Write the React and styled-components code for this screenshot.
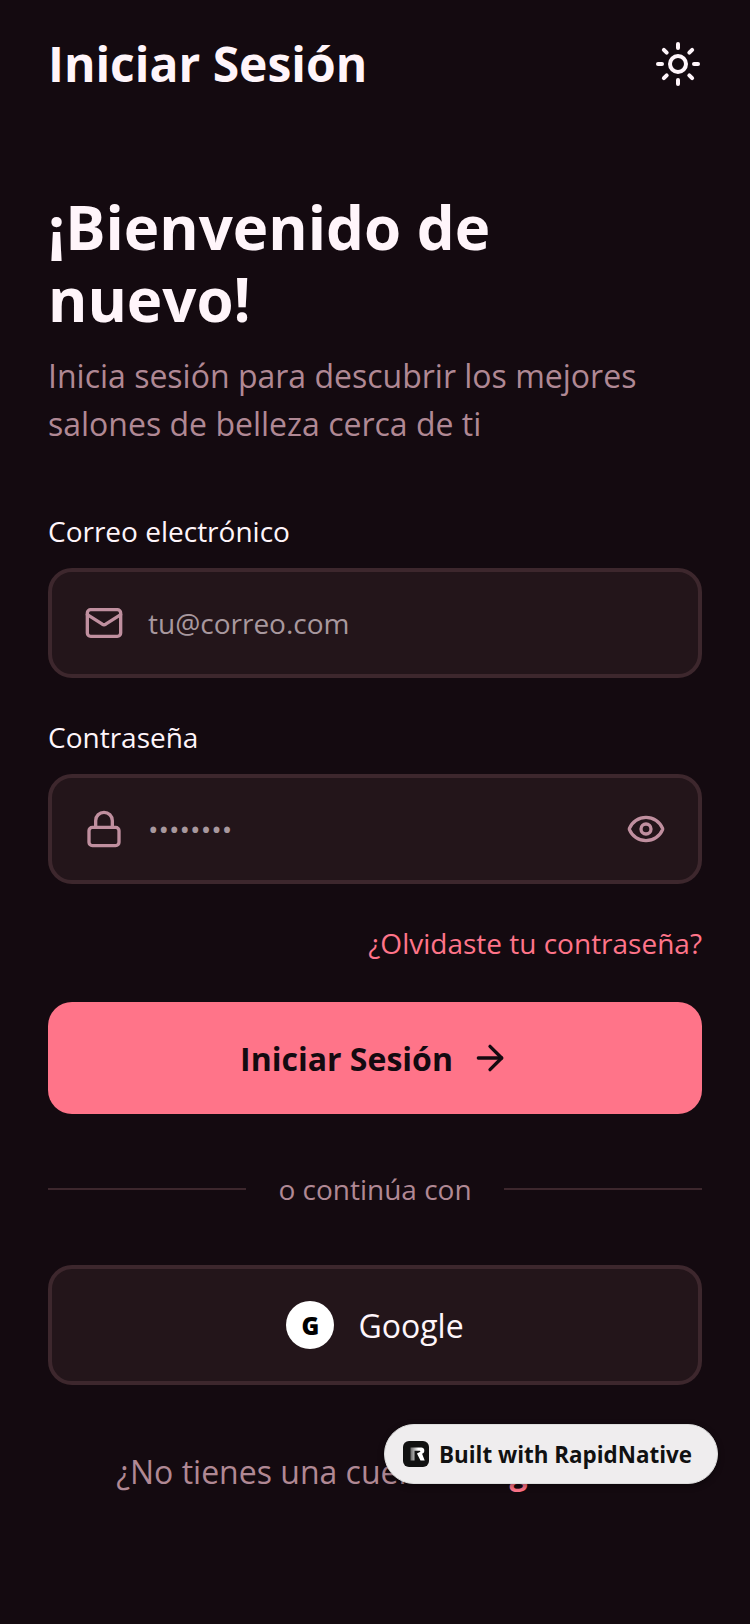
import styled, { createGlobalStyle } from "styled-components";
import { ArrowRight, Eye, Lock, Mail, Sun } from "lucide-react";

const GlobalStyle = createGlobalStyle`
  html, body {
    margin: 0;
    padding: 0;
    background: #140a10;
  }
  * {
    box-sizing: border-box;
  }
`;

const Page = styled.div`
  position: relative;
  width: 750px;
  height: 1624px;
  overflow: hidden;
  background: #140a10;
  font-family: "Open Sans", sans-serif;
  color: #fff;
`;

const Header = styled.header`
  display: flex;
  align-items: center;
  justify-content: space-between;
  padding: 30px 48px 0;
  height: 97px;
`;

const PageTitle = styled.h1`
  margin: 0;
  font-size: 48px;
  line-height: 66px;
  font-weight: 700;
  color: #fff5fa;
`;

const Main = styled.main`
  padding: 94px 48px 0;
`;

const Heading = styled.h2`
  margin: 0;
  font-size: 60px;
  line-height: 72px;
  font-weight: 700;
  color: #fff5fa;
`;

const Subtitle = styled.p`
  margin: 17px 0 0;
  font-size: 32px;
  line-height: 48px;
  color: #b08894;
`;

const Form = styled.form`
  display: flex;
  flex-direction: column;
  margin-top: 63px;
`;

const Label = styled.label`
  display: block;
  font-size: 28px;
  line-height: 40px;
  margin-bottom: 17px;
  color: #fff5fa;
`;

const Field = styled.div`
  margin-bottom: 39px;
`;

const InputBox = styled.div`
  display: flex;
  align-items: center;
  gap: 24px;
  height: 110px;
  padding: 0 32px;
  background: #23151a;
  border: 4px solid #3d272d;
  border-radius: 24px;
  color: #c08f9f;
`;

const Placeholder = styled.span`
  flex: 1;
  font-size: 28px;
  color: #a8989e;
`;

const Forgot = styled.a`
  align-self: flex-end;
  font-size: 28px;
  line-height: 40px;
  color: #ff7489;
`;

const PrimaryButton = styled.button`
  display: flex;
  align-items: center;
  justify-content: center;
  gap: 17px;
  height: 112px;
  margin-top: 39px;
  border: none;
  border-radius: 24px;
  background: #ff7489;
  color: #140a10;
  font-family: inherit;
  font-size: 32px;
  font-weight: 700;
`;

const Divider = styled.div`
  display: flex;
  align-items: center;
  gap: 32px;
  margin-top: 55px;
  font-size: 28px;
  line-height: 40px;
  color: #b08894;
`;

const Rule = styled.span`
  flex: 1;
  height: 2px;
  background: #3d272d;
`;

const GoogleButton = styled.button`
  display: flex;
  align-items: center;
  justify-content: center;
  gap: 24px;
  height: 120px;
  margin-top: 56px;
  background: #23151a;
  border: 4px solid #3d272d;
  border-radius: 24px;
  color: #fff5fa;
  font-family: inherit;
  font-size: 32px;
`;

const GoogleMark = styled.span`
  display: flex;
  align-items: center;
  justify-content: center;
  width: 48px;
  height: 48px;
  border-radius: 50%;
  background: #fff;
  color: #000;
  font-size: 24px;
  font-weight: 800;
`;

const Footer = styled.p`
  margin: 65px 0 0;
  text-align: center;
  font-size: 32px;
  line-height: 44px;
  color: #b08894;
`;

const FooterLink = styled.span`
  color: #ff7489;
  font-weight: 700;
`;

const Badge = styled.div`
  position: absolute;
  left: 384px;
  top: 1424px;
  display: flex;
  align-items: center;
  gap: 10px;
  width: 334px;
  height: 60px;
  padding: 0 18px;
  border-radius: 30px;
  background: #efedee;
  border: 1px solid #ddd;
  box-shadow: 0 2px 6px rgba(0, 0, 0, 0.4);
  color: #111;
  font-size: 22.4px;
  font-weight: 700;
  white-space: nowrap;
`;

const LogoSvg = styled.svg`
  flex-shrink: 0;
`;

const BadgeLogo = () => (
  <LogoSvg width="26" height="26" viewBox="0 0 26 26">
    <defs>
      <linearGradient id="logoFade" x1="0" x2="1" y1="0" y2="0">
        <stop offset="0" stopColor="#666" />
        <stop offset="0.55" stopColor="#fff" />
      </linearGradient>
    </defs>
    <rect width="26" height="26" rx="6" fill="#111" />
    <path
      d="M7.5 6.5H18a3 3 0 0 1 3.3 3.2c0 1.4-.8 2.6-2.2 3.1l2.6 6.7h-4.2l-3.6-7 3-1.5c.6-.3.6-1.3-.2-1.3h-5.2v9.8h-4z"
      fill="url(#logoFade)"
    />
  </LogoSvg>
);

export default function App() {
  return (
    <Page>
      <GlobalStyle />
      <Header>
        <PageTitle>Iniciar Sesión</PageTitle>
        <Sun size={48} color="#fff5fa" strokeWidth={2} />
      </Header>
      <Main>
        <Heading>¡Bienvenido de nuevo!</Heading>
        <Subtitle>Inicia sesión para descubrir los mejores salones de belleza cerca de ti</Subtitle>
        <Form>
          <Field>
            <Label>Correo electrónico</Label>
            <InputBox>
              <Mail size={40} />
              <Placeholder>tu@correo.com</Placeholder>
            </InputBox>
          </Field>
          <Field>
            <Label>Contraseña</Label>
            <InputBox>
              <Lock size={40} />
              <Placeholder>••••••••</Placeholder>
              <Eye size={40} />
            </InputBox>
          </Field>
          <Forgot>¿Olvidaste tu contraseña?</Forgot>
          <PrimaryButton type="button">
            Iniciar Sesión
            <ArrowRight size={40} />
          </PrimaryButton>
          <Divider>
            <Rule />
            o continúa con
            <Rule />
          </Divider>
          <GoogleButton type="button">
            <GoogleMark>G</GoogleMark>
            Google
          </GoogleButton>
        </Form>
        <Footer>
          ¿No tienes una cuenta? <FooterLink>Regístrate</FooterLink>
        </Footer>
      </Main>
      <Badge>
        <BadgeLogo />
        Built with RapidNative
      </Badge>
    </Page>
  );
}
